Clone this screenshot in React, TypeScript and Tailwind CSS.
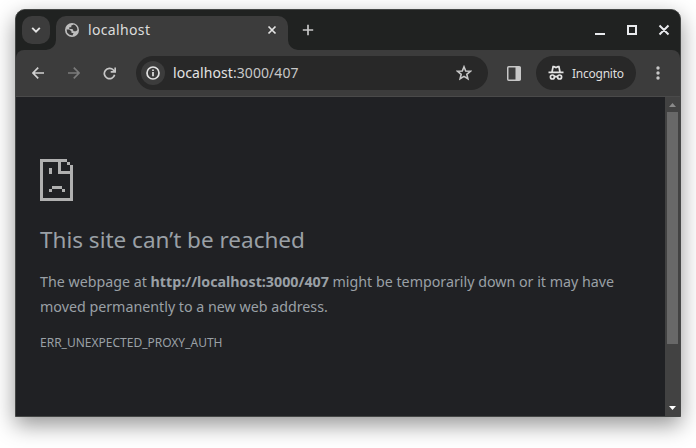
import React from "react";

const GREY = "#c7c7c7";

function Globe() {
  return (
    <svg width="14" height="14" viewBox="0 0 14 14" className="mr-[9px] shrink-0">
      <circle cx="7" cy="7" r="7" fill="#bdbdbd" />
      <path d="M8.800 1.600 6.300 2.400V4.200H4.300V6H7.500L8.600 8.300H11L12.400 7 12 4.500 10.500 2.500ZM1.600 6.500H4.500L6.500 8.500V10H8.500L7.500 12.400 4.500 11.800 2.200 9.800Z" fill="#3c3c3c" />
    </svg>
  );
}

function TitleBar() {
  return (
    <div className="flex h-10 bg-[#202221] pl-1.5 pt-1.5">
      <button className="flex size-7 items-center justify-center rounded-[10px] bg-[#3c3c3c]">
        <svg width="10" height="8" viewBox="0 0 10 8" fill="none" stroke="#e3e3e3" strokeWidth="1.900"><path d="M1.200 1.800 5 5.600 8.800 1.800" /></svg>
      </button>
      <div className="relative ml-1.5 flex h-[34px] w-[232px] rounded-t-[10px] bg-[#3c3c3c] pb-1.5 pl-[9px] pr-[11px]">
        <svg className="absolute -left-2.5 bottom-0" width="10" height="10" fill="#3c3c3c"><path d="M10 0V10H0A10 10 0 0 0 10 0" /></svg>
        <svg className="absolute -right-2.5 bottom-0" width="10" height="10" fill="#3c3c3c"><path d="M0 0V10H10A10 10 0 0 1 0 0" /></svg>
        <div className="flex flex-1 items-center text-[14px] tracking-[0.35px] text-[#dcdcdc]"><Globe /><span className="pb-0.5">localhost</span></div>
        <svg className="mt-[9px]" width="10" height="10" stroke="#e3e3e3" strokeWidth="1.700"><path d="M1.500 1.500l7 7M8.500 1.500l-7 7" /></svg>
      </div>
      <svg className="ml-[14px] mt-2" width="12" height="12" stroke="#c7c7c7" strokeWidth="1.700"><path d="M6 .8V11.200M.8 6H11.200" /></svg>
      <svg className="ml-auto mr-[10px] mt-2" width="76" height="12" fill="none" stroke="#e8eaed" strokeWidth="2">
        <path d="M1 10H11M34 2H42V10H34ZM65.500 1.500l9 9M74.500 1.500l-9 9" />
      </svg>
    </div>
  );
}

function Toolbar() {
  return (
    <div className="flex h-[46px] items-center rounded-t-lg bg-[#3c3c3c] pl-4 pr-5">
      <svg width="12" height="12" fill="none" stroke="#d0d0d0" strokeWidth="1.700"><path d="M6.200 .7.900 6l5.300 5.300M1 6h11" /></svg>
      <svg className="ml-6" width="12" height="12" fill="none" stroke="#7b7b7b" strokeWidth="1.700"><path d="M5.800 .7 11.100 6l-5.300 5.300M11 6H0" /></svg>
      <svg className="ml-[23px]" width="13" height="13" fill="none" stroke={GREY} strokeWidth="1.700"><path d="M11.600 7.700A5.200 5.200 0 1 1 10.400 3L12 4.600M12.200 .4V4.900H7.700" /></svg>
      <div className="ml-5 flex h-[34px] w-[352px] items-center rounded-full bg-[#282828] pl-[5px] pr-4">
        <div className="flex size-6 items-center justify-center rounded-full bg-[#3c3c3c]">
          <svg width="14" height="14" fill="none" stroke="#e3e3e3" strokeWidth="1.700"><circle cx="7" cy="7" r="6" /><path d="M7 6V10.300M7 3.500V5.100" /></svg>
        </div>
        <span className="ml-2 flex-1 pb-0.5 text-[14px] tracking-[0.080px] text-[#c7c7c7]"><span className="text-[#e3e3e3]">localhost</span>:3000/407</span>
        <svg width="16" height="16" viewBox="0 0 16 16" fill="none" stroke={GREY} strokeWidth="1.600"><path d="M8 1.800 9.700 6l4.600.3-3.500 3 1.100 4.500L8 11.400l-3.900 2.400 1.100-4.500-3.500-3L6.300 6Z" /></svg>
      </div>
      <svg className="ml-[19px]" width="14" height="15"><rect x=".75" y=".75" width="12.500" height="13.500" fill="none" stroke={GREY} strokeWidth="1.500" rx="1" /><rect x="8.500" y="1" width="5" height="13" fill={GREY} /></svg>
      <div className="ml-[15px] flex h-[34px] w-[100px] items-center rounded-full bg-[#282828] pl-3 text-[12px] tracking-[-0.25px] text-[#dedede]">
        <svg className="mr-2 shrink-0" width="16" height="16" viewBox="0 0 16 16" fill="none" stroke="#e3e3e3" strokeWidth="1.700"><path d="M.5 7.300H15.500M4 7 5.100 1.700H6L8 2.500 10 1.700H10.900L12 7M6.600 12Q8 10.800 9.400 12" /><circle cx="4.400" cy="12" r="2" /><circle cx="11.600" cy="12" r="2" /></svg>
        <span className="pt-px">Incognito</span>
      </div>
      <svg className="ml-auto" width="4" height="14" fill={GREY}><circle cx="2" cy="2" r="1.700" /><circle cx="2" cy="7" r="1.700" /><circle cx="2" cy="12" r="1.700" /></svg>
    </div>
  );
}

function ErrorPage() {
  return (
    <div className="flex h-[320px] border-t border-[#4a4a4a] bg-[#202124]">
      <main className="flex-1 pl-6 pt-[62px] text-[#9aa0a6]">
        <svg width="33" height="42" viewBox="0 0 33 42" fill="#b0b0b0" shapeRendering="crispEdges">
          <path d="M0 0H27V3H21V12H30V6H33V42H0ZM3 3V39H30V15H18V3ZM27 3H30V6H27ZM9 9H12V15H9ZM12 27H22V30H12ZM9 30H12V33H9ZM22 30H25V33H22Z" fillRule="evenodd" />
        </svg>
        <h1 className="mt-[23px] text-[22.500px] leading-8">This site can’t be reached</h1>
        <p className="mt-[13px] w-[600px] text-[14.250px] leading-[25px]">The webpage at <b>http://localhost:3000/407</b> might be temporarily down or it may have<br />moved permanently to a new web address.</p>
        <p className="mt-[14px] text-[12px] leading-5">ERR_UNEXPECTED_PROXY_AUTH</p>
      </main>
      <aside className="flex w-[15px] flex-col items-center bg-[#424242] pb-1.5 pt-1.5">
        <svg width="7" height="4" fill="#8a8a8a"><path d="M0 4 3.500 0 7 4Z" /></svg>
        <div className="mt-[5px] h-[232px] w-[11px] bg-[#686868]" />
        <svg className="mt-auto" width="7" height="4" fill="#fff"><path d="M0 0H7L3.500 4Z" /></svg>
      </aside>
    </div>
  );
}

export default function App() {
  return (
    <div className="h-[448px] w-[696px] overflow-hidden bg-white pl-[15px] pt-[9px] font-['Noto_Sans',sans-serif]">
      <div className="h-[408px] w-[666px] overflow-hidden rounded-t-[10px] border border-[#454746] bg-[#202221] shadow-[0_8px_22px_rgba(0,0,0,0.42)]">
        <TitleBar />
        <Toolbar />
        <ErrorPage />
      </div>
    </div>
  );
}
